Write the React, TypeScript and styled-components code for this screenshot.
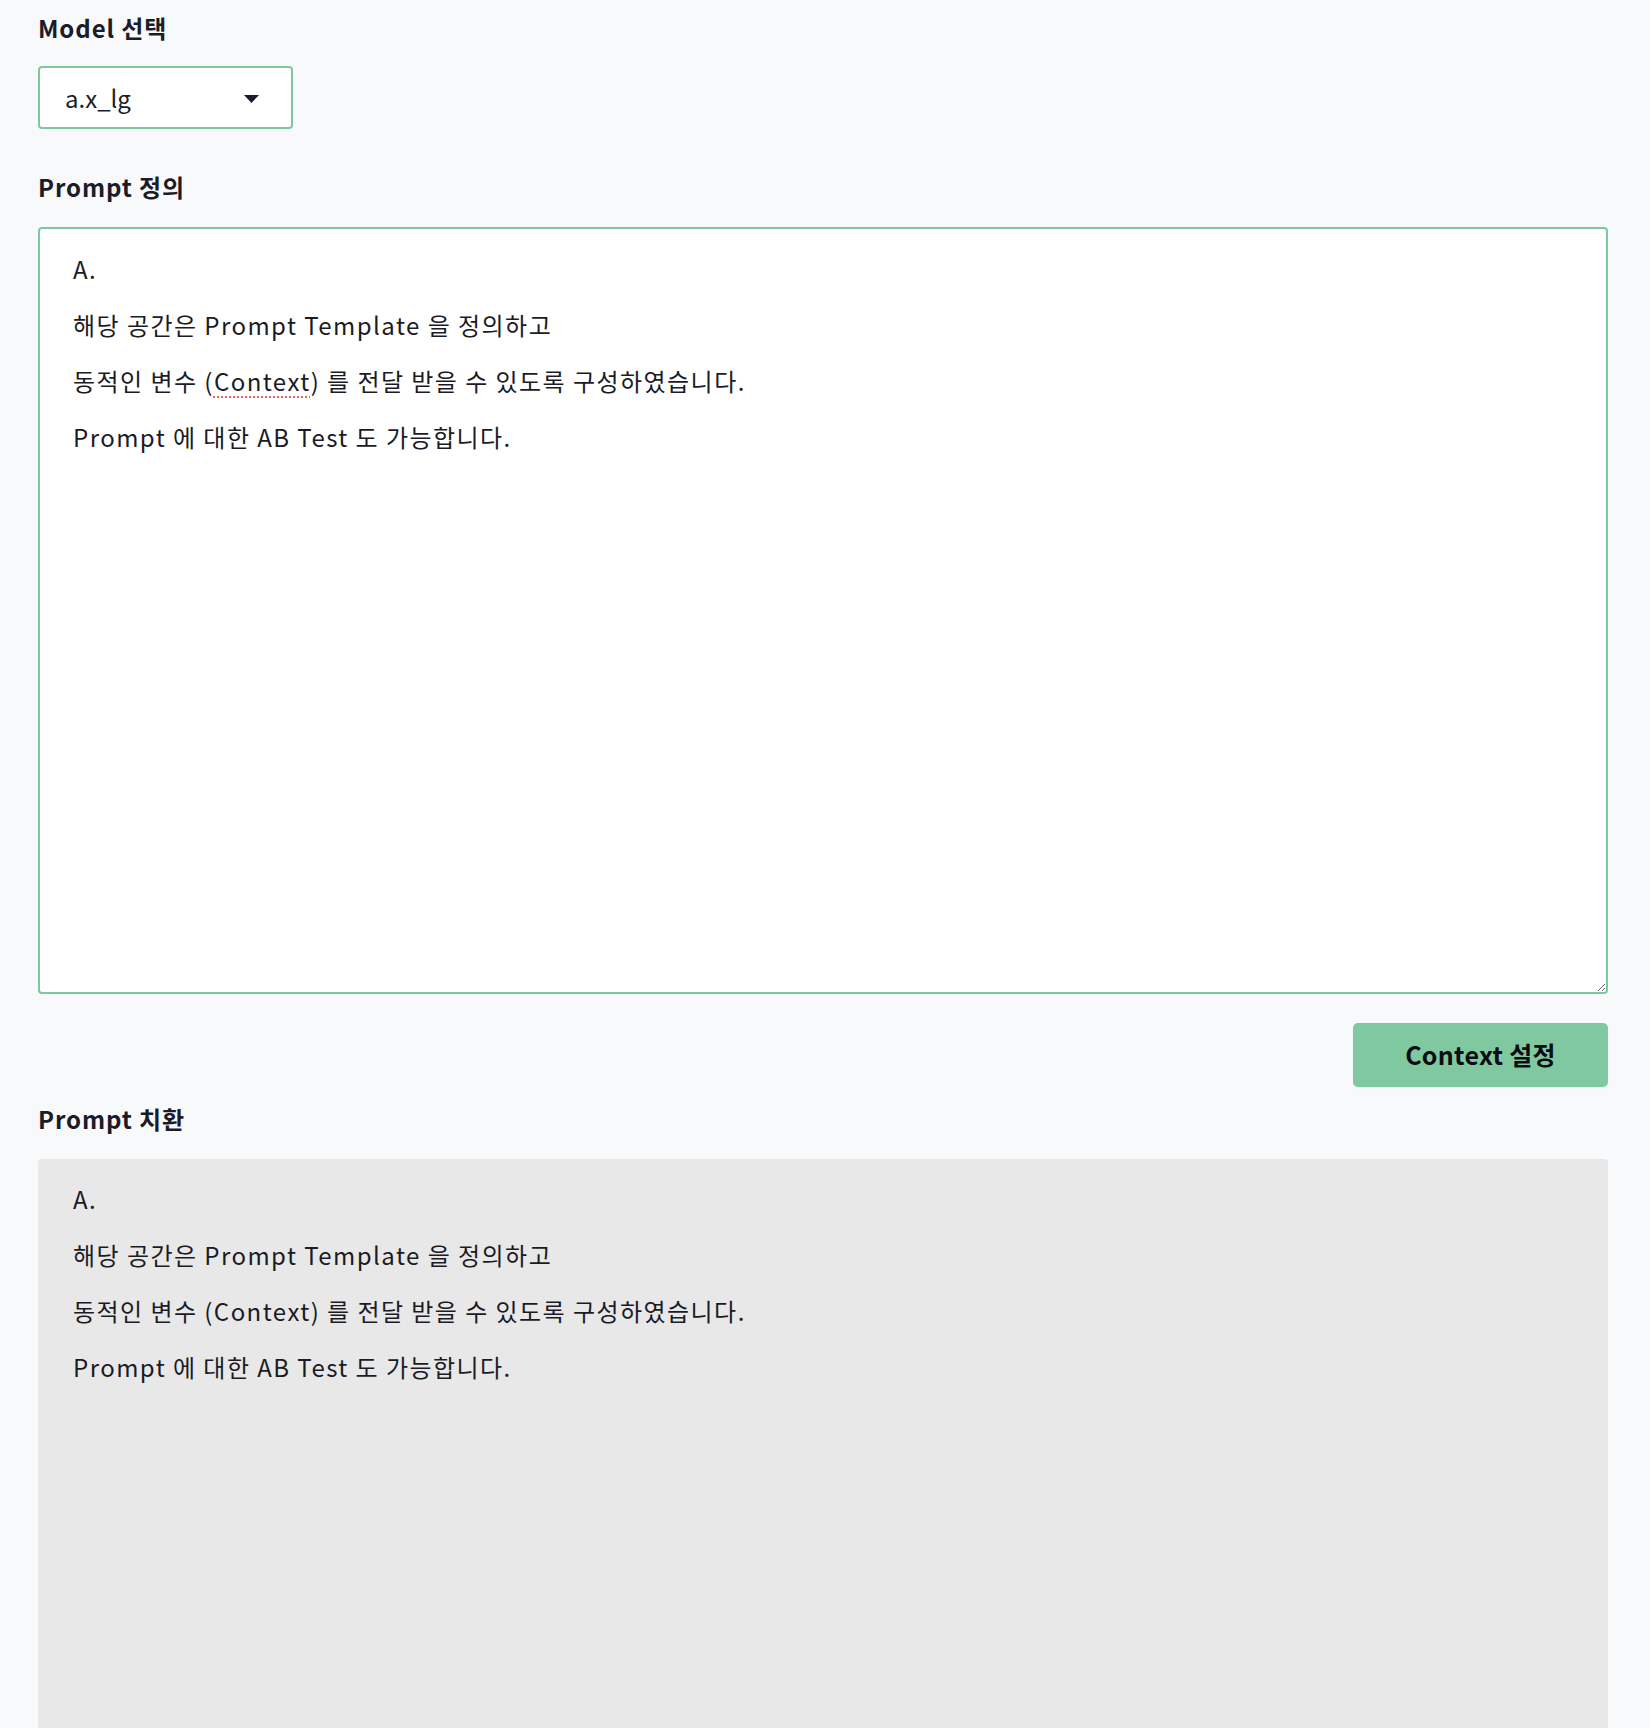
import { createGlobalStyle, styled } from "styled-components";

const GlobalStyle = createGlobalStyle`
  html, body {
    margin: 0;
    padding: 0;
    background: #f8f9fb;
  }
  body {
    font-family: "Noto Sans CJK KR", "Noto Sans", sans-serif;
    color: #1b1c28;
  }
`;

const Page = styled.div`
  display: flex;
  flex-direction: column;
  padding: 10px 42px 0 38px;
`;

const Label = styled.div<{ $gap?: number }>`
  font-size: 24px;
  line-height: 35px;
  font-weight: 700;
  letter-spacing: 0.9px;
  color: #1b1c28;
  margin-bottom: ${({ $gap }) => $gap ?? 23}px;
`;

const SelectBox = styled.button`
  width: 255px;
  height: 63px;
  box-sizing: border-box;
  display: flex;
  align-items: center;
  justify-content: space-between;
  padding: 0 32px 0 25px;
  background: #fff;
  border: 2px solid #7ec8a0;
  border-radius: 4px;
  font-family: inherit;
  font-size: 24px;
  color: #1b1c28;
  cursor: pointer;
  margin-bottom: 40px;
`;

const Caret = styled.svg`
  width: 15px;
  height: 8px;
  display: block;
  margin-top: 2px;
`;

const Editor = styled.div`
  box-sizing: border-box;
  height: 767px;
  padding: 12px 33px;
  background: #fff;
  border: 2px solid #7ec8a0;
  border-radius: 4px;
  font-size: 24px;
  line-height: 56px;
  letter-spacing: 1.45px;
  color: #1a1b24;
  resize: vertical;
  overflow: auto;
  outline: none;
  white-space: pre-wrap;
`;

const Misspelled = styled.span`
  text-decoration: underline dotted #e8665c;
  text-decoration-thickness: 2px;
  text-underline-offset: 5px;
`;

const Actions = styled.div`
  display: flex;
  justify-content: flex-end;
  padding: 29px 0 14px;
`;

const PrimaryButton = styled.button`
  width: 255px;
  height: 64px;
  border: none;
  border-radius: 5px;
  background: #80c9a0;
  color: #0c0d12;
  font-family: inherit;
  font-size: 25px;
  font-weight: 700;
  letter-spacing: 0.3px;
  padding-bottom: 4px;
  cursor: pointer;
  box-shadow: 0 1px 2px rgba(0, 0, 0, 0.06);
`;

const Output = styled.div`
  min-height: 767px;
  padding: 12px 35px;
  background: #e8e8e8;
  border-radius: 4px;
  font-size: 24px;
  line-height: 56px;
  letter-spacing: 1.45px;
  color: #1a1b24;
`;

const Line = styled.div``;

const lines = [
  "A.",
  "해당 공간은 Prompt Template 을 정의하고",
  "동적인 변수 (Context) 를 전달 받을 수 있도록 구성하였습니다.",
  "Prompt 에 대한 AB Test 도 가능합니다.",
];

export default function App() {
  return (
    <>
      <GlobalStyle />
      <Page>
        <Label $gap={21}>Model 선택</Label>
        <SelectBox type="button">
          <span>a.x_lg</span>
          <Caret viewBox="0 0 15 8">
            <path d="M0 0h15L7.5 8z" fill="#1b1c28" />
          </Caret>
        </SelectBox>

        <Label>Prompt 정의</Label>
        <Editor contentEditable suppressContentEditableWarning spellCheck={false}>
          <Line>A.</Line>
          <Line>해당 공간은 Prompt Template 을 정의하고</Line>
          <Line>
            동적인 변수 (<Misspelled>Context</Misspelled>) 를 전달 받을 수 있도록 구성하였습니다.
          </Line>
          <Line>Prompt 에 대한 AB Test 도 가능합니다.</Line>
        </Editor>

        <Actions>
          <PrimaryButton type="button">Context 설정</PrimaryButton>
        </Actions>

        <Label>Prompt 치환</Label>
        <Output>
          {lines.map((l) => (
            <Line key={l}>{l}</Line>
          ))}
        </Output>
      </Page>
    </>
  );
}
